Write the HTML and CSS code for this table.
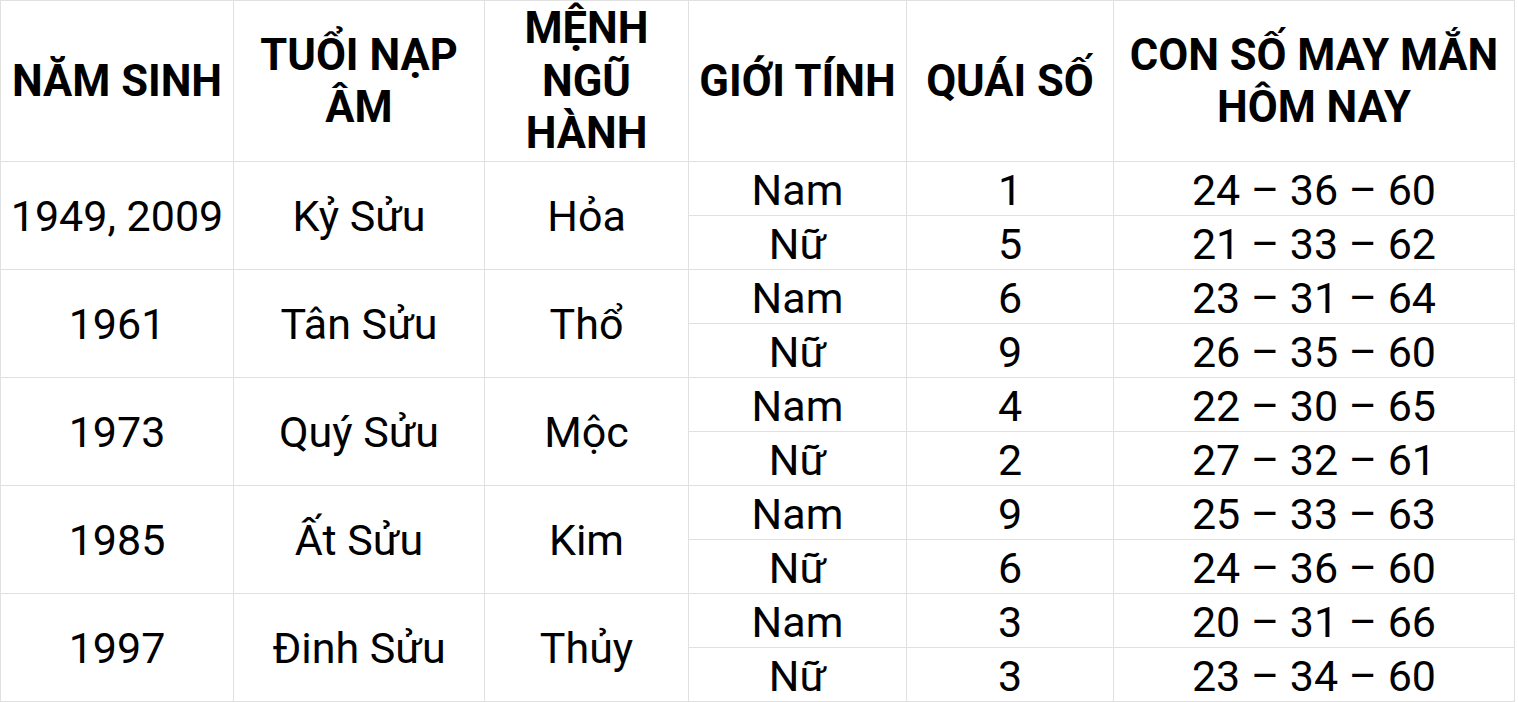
FILE: index.html
```html
<!DOCTYPE html>
<html lang="vi">
<head>
<meta charset="utf-8">
<link rel="stylesheet" href="styles.css">
</head>
<body>
<div class="table">
  <div class="cell head">NĂM SINH</div>
  <div class="cell head">TUỔI NẠP<br>ÂM</div>
  <div class="cell head">MỆNH<br>NGŨ<br>HÀNH</div>
  <div class="cell head">GIỚI TÍNH</div>
  <div class="cell head">QUÁI SỐ</div>
  <div class="cell head">CON SỐ MAY MẮN<br>HÔM NAY</div>

  <div class="cell span2">1949, 2009</div>
  <div class="cell span2">Kỷ Sửu</div>
  <div class="cell span2">Hỏa</div>
  <div class="cell">Nam</div><div class="cell">1</div><div class="cell">24 – 36 – 60</div>
  <div class="cell">Nữ</div><div class="cell">5</div><div class="cell">21 – 33 – 62</div>

  <div class="cell span2">1961</div>
  <div class="cell span2">Tân Sửu</div>
  <div class="cell span2">Thổ</div>
  <div class="cell">Nam</div><div class="cell">6</div><div class="cell">23 – 31 – 64</div>
  <div class="cell">Nữ</div><div class="cell">9</div><div class="cell">26 – 35 – 60</div>

  <div class="cell span2">1973</div>
  <div class="cell span2">Quý Sửu</div>
  <div class="cell span2">Mộc</div>
  <div class="cell">Nam</div><div class="cell">4</div><div class="cell">22 – 30 – 65</div>
  <div class="cell">Nữ</div><div class="cell">2</div><div class="cell">27 – 32 – 61</div>

  <div class="cell span2">1985</div>
  <div class="cell span2">Ất Sửu</div>
  <div class="cell span2">Kim</div>
  <div class="cell">Nam</div><div class="cell">9</div><div class="cell">25 – 33 – 63</div>
  <div class="cell">Nữ</div><div class="cell">6</div><div class="cell">24 – 36 – 60</div>

  <div class="cell span2">1997</div>
  <div class="cell span2">Đinh Sửu</div>
  <div class="cell span2">Thủy</div>
  <div class="cell">Nam</div><div class="cell">3</div><div class="cell">20 – 31 – 66</div>
  <div class="cell">Nữ</div><div class="cell">3</div><div class="cell">23 – 34 – 60</div>
</div>
</body>
</html>
```
FILE: styles.css
```css
html, body {
  margin: 0;
  padding: 0;
  background: #ffffff;
}
body {
  font-family: Roboto, "Noto Sans", sans-serif;
  color: #000000;
}
.table {
  display: grid;
  grid-template-columns: 232px 250px 203px 217px 206px 400px;
  grid-template-rows: 160px repeat(10, 53px);
  gap: 1px;
  padding: 1px;
  background: #e0e0e0;
  width: max-content;
}
.cell {
  background: #ffffff;
  display: flex;
  align-items: center;
  justify-content: center;
  text-align: center;
  font-size: 43px;
  line-height: 53px;
  padding-top: 4px;
  white-space: nowrap;
}
.head {
  font-weight: 700;
  font-size: 43.5px;
  line-height: 52.5px;
  padding-top: 2px;
}
.span2 {
  grid-row: span 2;
  padding-top: 2px;
}
```
